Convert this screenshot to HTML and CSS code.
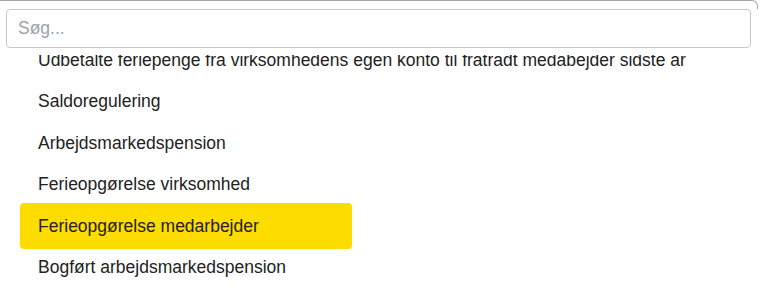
FILE: index.html
```html
<!DOCTYPE html>
<html lang="da">
<head>
  <meta charset="UTF-8">
  <title>Søg konto</title>
  <link rel="stylesheet" href="styles.css">
</head>
<body>
  <div class="picker">
    <div class="picker-head">
      <input type="text" class="search" placeholder="Søg...">
    </div>
    <ul class="options">
      <li class="option">Udbetalte feriepenge fra virksomhedens egen konto til fratrådt medabejder sidste år</li>
      <li class="option">Saldoregulering</li>
      <li class="option">Arbejdsmarkedspension</li>
      <li class="option">Ferieopgørelse virksomhed</li>
      <li class="option active">Ferieopgørelse medarbejder</li>
      <li class="option">Bogført arbejdsmarkedspension</li>
    </ul>
  </div>
</body>
</html>
```

FILE: styles.css
```css
html, body {margin: 0; background: #fff;}
body {font-family: "Liberation Sans", Arial, sans-serif; color: #222;}

.picker {
  width: 758px;
  height: 294px;
  overflow: hidden;
}

.picker::before {
  content: "";
  display: block;
  height: 8px;
  margin-left: -10px;
  border-top: 1px solid #a6a6a6;
  border-right: 1px solid #a6a6a6;
  border-top-right-radius: 6px;
}

.picker-head {
  position: relative;
  z-index: 1;
  background: #fff;
  padding: 0 0 7px 6px;
}

.search {
  display: block;
  box-sizing: border-box;
  width: 745px;
  height: 39px;
  margin: 0;
  padding: 0 11px;
  border: 1px solid #c9c9c9;
  border-radius: 4px;
  font-family: inherit;
  font-size: 17.5px;
  color: #222;
  outline: none;
}
.search::placeholder {color: #9aa1ad;}

.options {
  list-style: none;
  margin: -16px 0 0 20px;
  padding: 0;
}

.option {
  box-sizing: border-box;
  width: max-content;
  min-width: 332px;
  padding: 10.75px 18px;
  font-size: 17.5px;
  line-height: 20px;
  white-space: nowrap;
  border-radius: 4px;
}

.option.active {
  background: #fddc00;
  padding-top: 13px;
  padding-bottom: 13px;
  margin: -2.25px 0;
}
```
